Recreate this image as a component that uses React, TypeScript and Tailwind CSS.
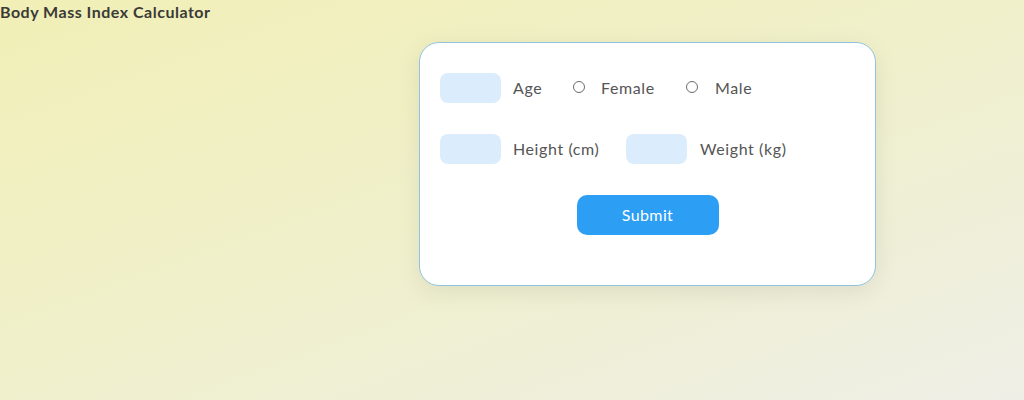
import React from 'react';

const fieldCls = 'w-[61px] h-[30px] rounded-[8px] bg-[#dbedfc] outline-none border-0';
const labelCls = 'text-[16px] text-[#555555] leading-none tracking-[0.6px]';

function Radio({ name }: { name: string }) {
  return (
    <label className="flex items-center">
      <input type="radio" name="gender" value={name} className="sr-only" />
      <span className="w-[12px] h-[12px] rounded-full border border-[#6b6b6b] bg-white -mt-[2px]" />
    </label>
  );
}

export default function App() {
  return (
    <div
      className="w-[1024px] h-[400px] bg-[linear-gradient(160deg,#f1efb6_0%,#f0f0cc_50%,#eeeee6_100%)] text-[#333]"
      style={{ fontFamily: 'Lato, "Open Sans", sans-serif' }}
    >
      <h1 className="h-[24px] flex items-center text-[16px] font-bold text-[#3a3a36] tracking-[0.5px]">
        Body Mass Index Calculator
      </h1>

      <form className="ml-[419px] mt-[18px] w-[457px] h-[244px] bg-white border border-[#90c4de] rounded-[20px] shadow-[0_6px_24px_rgba(0,0,0,0.08)] pt-[30px] px-[20px] flex flex-col gap-[31px]">
        <div className="flex items-center">
          <input type="number" className={fieldCls} />
          <span className={`${labelCls} ml-[12px] w-[60px]`}>Age</span>
          <Radio name="female" />
          <span className={`${labelCls} ml-[16px] w-[85px]`}>Female</span>
          <Radio name="male" />
          <span className={`${labelCls} ml-[17px]`}>Male</span>
        </div>

        <div className="flex items-center">
          <input type="number" className={fieldCls} />
          <span className={`${labelCls} ml-[12px] w-[113px]`}>Height (cm)</span>
          <input type="number" className={fieldCls} />
          <span className={`${labelCls} ml-[13px]`}>Weight (kg)</span>
        </div>

        <button
          type="submit"
          className="self-center w-[142px] h-[40px] rounded-[10px] bg-[#2c9ef4] text-white text-[16px] tracking-[0.4px]"
        >
          Submit
        </button>
      </form>
    </div>
  );
}
